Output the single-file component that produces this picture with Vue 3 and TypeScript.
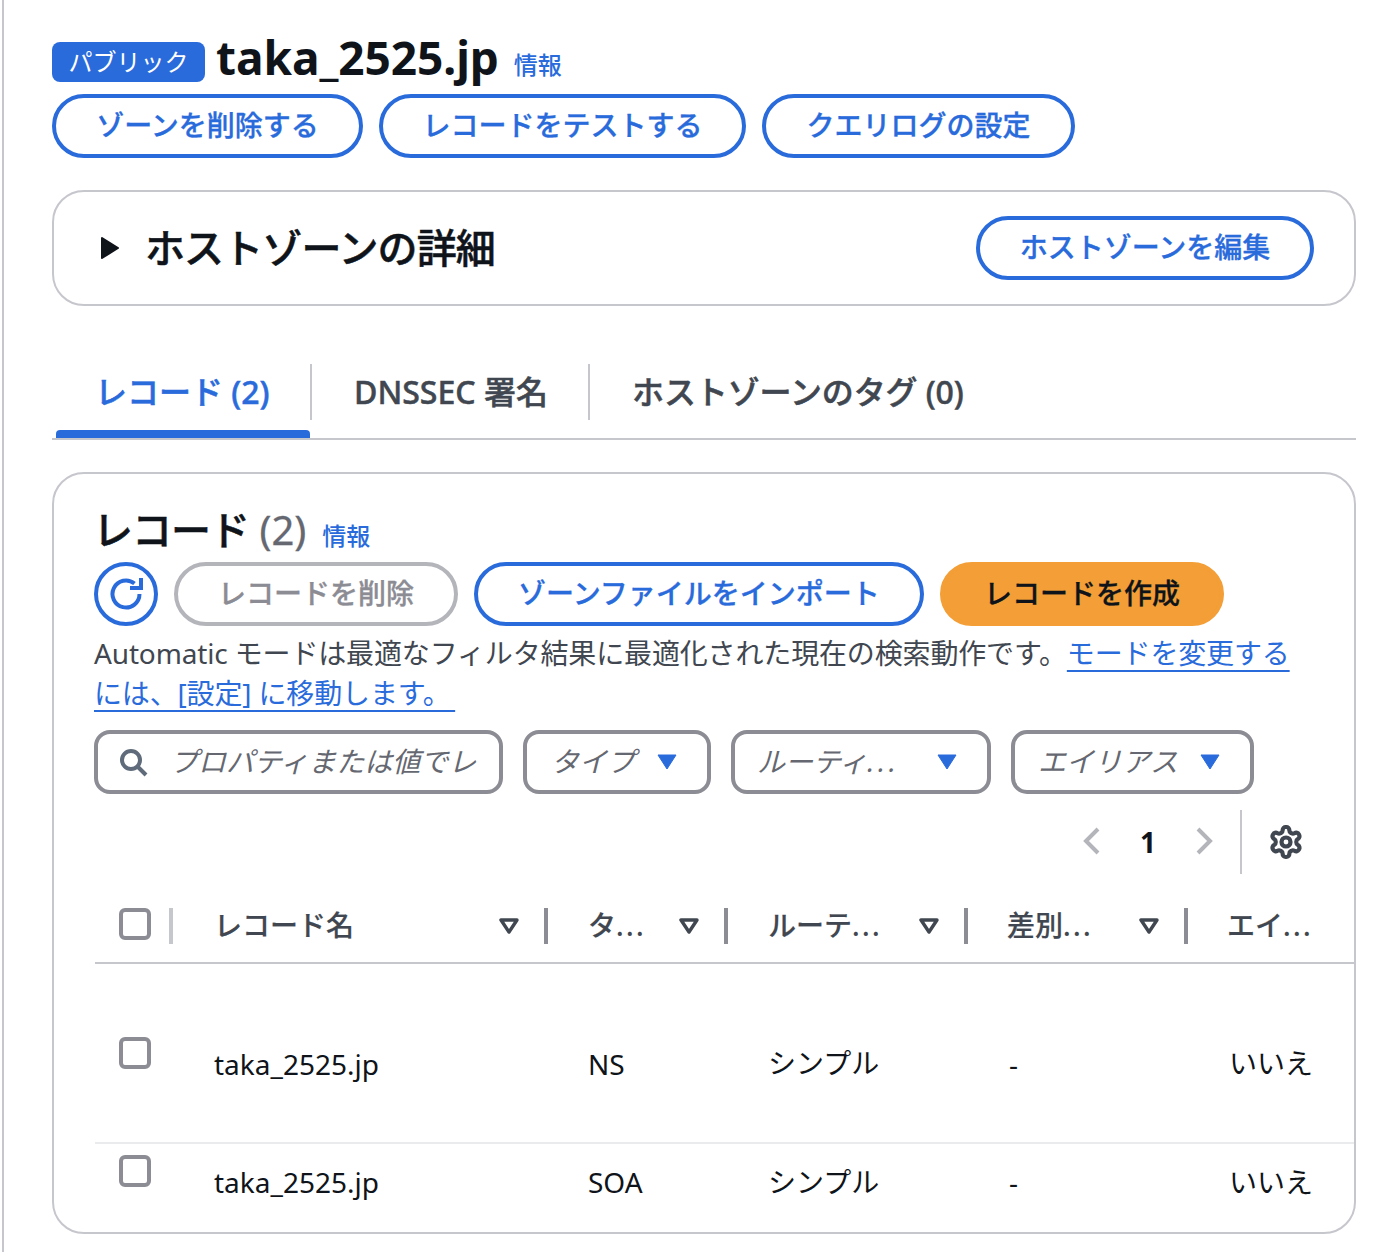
<script setup lang="ts">
interface Col { label: string; dots: boolean; cls: string }
const cols: Col[] = [
  { label: 'レコード名', dots: false, cls: 'c-name' },
  { label: 'タ', dots: true, cls: 'c-type' },
  { label: 'ルーテ', dots: true, cls: 'c-route' },
  { label: '差別', dots: true, cls: 'c-diff' },
]
const rows = [
  { name: 'taka_2525.jp', type: 'NS', route: 'シンプル', diff: '-', alias: 'いいえ', cls: 'row-tall' },
  { name: 'taka_2525.jp', type: 'SOA', route: 'シンプル', diff: '-', alias: 'いいえ', cls: 'row-short' },
]
const filters = [
  { label: 'タイプ', dots: false, cls: 'f-type' },
  { label: 'ルーティ', dots: true, cls: 'f-route' },
  { label: 'エイリアス', dots: false, cls: 'f-alias' },
]
</script>

<template>
  <div class="page">
    <header class="head">
      <div class="title-row">
        <span class="badge">パブリック</span>
        <h1 class="zone">taka_2525.jp</h1>
        <a class="info">情報</a>
      </div>
      <div class="btn-row">
        <button class="btn w1">ゾーンを削除する</button>
        <button class="btn w2">レコードをテストする</button>
        <button class="btn w3">クエリログの設定</button>
      </div>
    </header>

    <section class="card details">
      <div class="details-left">
        <svg class="expand" viewBox="0 0 20 24" width="20" height="24"><path d="M2 2 L18 12 L2 22 Z" fill="#0f141a" stroke="#0f141a" stroke-width="2" stroke-linejoin="round" /></svg>
        <h2 class="h-details">ホストゾーンの詳細</h2>
      </div>
      <button class="btn w4">ホストゾーンを編集</button>
    </section>

    <nav class="tabs">
      <div class="tab active t1"><span>レコード (2)</span></div>
      <div class="tab t2"><span>DNSSEC 署名</span></div>
      <div class="tab t3"><span>ホストゾーンのタグ (0)</span></div>
    </nav>

    <section class="card records">
      <div class="rec-pad">
        <div class="rec-title">
          <h2 class="h-rec"><span class="rec-word">レコード</span> <span class="count">(2)</span></h2>
          <a class="info">情報</a>
        </div>
        <div class="toolbar">
          <button class="icon-btn" aria-label="更新">
            <svg viewBox="0 0 36 36" width="36" height="36" fill="none" stroke="#2a6bdc" stroke-width="4">
              <path d="M31.5 18 A13.5 13.5 0 1 1 26.5 7.5" />
              <path d="M33 2 V12 H22" stroke-linejoin="miter" />
            </svg>
          </button>
          <button class="btn disabled w5">レコードを削除</button>
          <button class="btn w6">ゾーンファイルをインポート</button>
          <button class="btn primary w7">レコードを作成</button>
        </div>
        <p class="notice">Automatic モードは最適なフィルタ結果に最適化された現在の検索動作です。<a class="link">モードを変更するには、[設定] に移動します。&thinsp;</a></p>
        <div class="filters">
          <div class="filter f-search">
            <svg viewBox="0 0 32 32" width="32" height="32" fill="none" stroke="#5f6b7a" stroke-width="4"><circle cx="14" cy="14" r="9" /><path d="M20.5 20.5 L29 29" /></svg>
            <span class="ph">プロパティまたは値でレ</span>
          </div>
          <div v-for="f in filters" :key="f.cls" class="filter" :class="f.cls">
            <span class="ph">{{ f.label }}<span v-if="f.dots" class="dots">...</span></span>
            <svg viewBox="0 0 20 16" width="20" height="16"><path d="M1 1 H19 L10 15 Z" fill="#2a6bdc" stroke="#2a6bdc" stroke-linejoin="round" /></svg>
          </div>
        </div>
        <div class="pager">
          <svg viewBox="0 0 20 32" width="20" height="32" fill="none" stroke="#b4b4bb" stroke-width="4"><path d="M16 3 L4 15 L16 27" /></svg>
          <span class="page-num">1</span>
          <svg viewBox="0 0 20 32" width="20" height="32" fill="none" stroke="#b4b4bb" stroke-width="4"><path d="M4 3 L16 15 L4 27" /></svg>
          <span class="pager-sep"></span>
          <svg class="gear" viewBox="0 0 24 24" width="36" height="36" fill="none" stroke="#414750" stroke-width="2.8" stroke-linejoin="round">
            <path d="M12.22 2h-.44a2 2 0 0 0-2 2v.18a2 2 0 0 1-1 1.73l-.43.25a2 2 0 0 1-2 0l-.15-.08a2 2 0 0 0-2.73.73l-.22.38a2 2 0 0 0 .73 2.73l.15.1a2 2 0 0 1 1 1.72v.51a2 2 0 0 1-1 1.74l-.15.09a2 2 0 0 0-.73 2.73l.22.38a2 2 0 0 0 2.73.73l.15-.08a2 2 0 0 1 2 0l.43.25a2 2 0 0 1 1 1.73V20a2 2 0 0 0 2 2h.44a2 2 0 0 0 2-2v-.18a2 2 0 0 1 1-1.73l.43-.25a2 2 0 0 1 2 0l.15.08a2 2 0 0 0 2.73-.73l.22-.39a2 2 0 0 0-.73-2.73l-.15-.08a2 2 0 0 1-1-1.74v-.5a2 2 0 0 1 1-1.74l.15-.09a2 2 0 0 0 .73-2.73l-.22-.38a2 2 0 0 0-2.73-.73l-.15.08a2 2 0 0 1-2 0l-.43-.25a2 2 0 0 1-1-1.73V4a2 2 0 0 0-2-2z" />
            <circle cx="12" cy="12" r="3" />
          </svg>
        </div>
      </div>

      <div class="table">
        <div class="tr thead">
          <div class="td c-sel"><span class="check"></span><span class="sep light"></span></div>
          <div v-for="c in cols" :key="c.cls" class="td th" :class="c.cls">
            <span>{{ c.label }}<span v-if="c.dots" class="dots">...</span></span>
            <svg class="sort" viewBox="0 0 20 16" width="20" height="16" fill="none" stroke="#414750" stroke-width="3.4" stroke-linejoin="round"><path d="M2 2 H18 L10 14 Z" /></svg>
            <span class="sep"></span>
          </div>
          <div class="td th c-alias"><span>エイ<span class="dots">...</span></span></div>
        </div>
        <div v-for="r in rows" :key="r.type" class="tr tbody" :class="r.cls">
          <div class="td c-sel"><span class="check"></span></div>
          <div class="td c-name cell">{{ r.name }}</div>
          <div class="td c-type cell">{{ r.type }}</div>
          <div class="td c-route cell ja">{{ r.route }}</div>
          <div class="td c-diff cell">{{ r.diff }}</div>
          <div class="td c-alias cell ja">{{ r.alias }}</div>
        </div>
      </div>
    </section>
  </div>
</template>

<style>
html, body { margin: 0; background: #fff; }
</style>

<style scoped>
* { box-sizing: border-box; }
.page {
  height: 1252px;
  overflow: hidden;
  margin-left: 2px;
  width: 1396px;
  padding: 30px 42px 0 48px;
  border-left: 2px solid #c6c6cd;
  font-family: "Noto Sans", "Noto Sans CJK JP", sans-serif;
  color: #0f141a;
  display: flex;
  flex-direction: column;
}
button { font-family: inherit; }
h1, h2, p { margin: 0; }

.head { display: flex; flex-direction: column; }
.title-row { display: flex; align-items: center; height: 60px; }
.badge {
  width: 153px; height: 40px; margin-top: 4px;
  background: #2a6bdc; color: #fff; border-radius: 8px;
  font-size: 24px; line-height: 40px; text-align: center;
}
.zone { font-size: 46px; line-height: 54px; font-weight: 700; margin-left: 11px; margin-bottom: 6px; letter-spacing: -0.05px; }
.info { color: #2a6bdc; font-size: 24px; font-weight: 500; margin-left: 15px; margin-top: 6px; }
.btn-row { display: flex; gap: 16px; margin-top: 4px; }

.btn {
  height: 64px; border: 4px solid #2a6bdc; border-radius: 32px; background: #fff;
  color: #2a6bdc; font-size: 28px; font-weight: 500; padding: 0 0 2px; white-space: nowrap;
  line-height: 1; display: flex; align-items: center; justify-content: center;
  -webkit-text-stroke: 0.3px currentColor;
}
.w1 { width: 311px; } .w2 { width: 367px; } .w3 { width: 313px; }
.w4 { width: 338px; } .w5 { width: 284px; } .w6 { width: 450px; } .w7 { width: 284px; }
.btn.disabled { border-color: #b4b4bb; color: #8c8c94; }
.btn.primary { background: #f39e36; border-color: #f39e36; color: #0f141a; }

.card { border: 2px solid #c6c6cd; border-radius: 32px; background: #fff; }
.details {
  margin-top: 32px; height: 116px; display: flex; align-items: center;
  justify-content: space-between; padding: 0 40px 0 46px;
}
.details-left { display: flex; align-items: center; gap: 25px; }
.h-details { font-size: 40px; font-weight: 500; line-height: 52px; letter-spacing: -0.9px; -webkit-text-stroke: 0.5px currentColor; }

.tabs {
  margin-top: 58px; height: 76px; display: flex; border-bottom: 2px solid #c6c6cd; position: relative;
}
.tab {
  height: 56px; display: flex; align-items: center; font-size: 32px; font-weight: 500; color: #414750;
  white-space: nowrap; padding-left: 42px; padding-bottom: 4px; position: relative;
  -webkit-text-stroke: 0.5px currentColor;
}
.t1 { width: 260px; padding-left: 43px; border-right: 2px solid #c6c6cd; }
.t2 { width: 278px; border-right: 2px solid #c6c6cd; }
.t3 { flex: 1; padding-left: 42px; letter-spacing: -0.1px; }
.tab.active { color: #2a6bdc; }
.tab.active::after {
  content: ""; position: absolute; left: 4px; right: 0; top: 66px; height: 8px;
  background: #2a6bdc; border-radius: 4px 4px 0 0;
}

.records { margin-top: 32px; height: 762px; overflow: hidden; }
.rec-pad { padding: 26px 40px 0 40px; }
.rec-title { display: flex; align-items: center; height: 62px; padding-bottom: 2px; }
.h-rec { font-size: 40px; font-weight: 500; line-height: 60px; margin-left: -1px; }
.rec-word { letter-spacing: -1px; -webkit-text-stroke: 0.5px currentColor; }
.count { font-weight: 400; color: #656871; font-size: 40px; -webkit-text-stroke: 0.3px currentColor; }
.rec-title .info { margin-left: 16px; margin-top: 8px; }

.toolbar { display: flex; gap: 16px; align-items: center; }
.icon-btn {
  width: 64px; height: 64px; border-radius: 50%; border: 4px solid #2a6bdc; background: #fff;
  display: flex; align-items: center; justify-content: center; padding: 0;
}
.notice { font-size: 28px; line-height: 40px; color: #414750; margin-top: 7px; width: 1210px; letter-spacing: -0.15px; }
.link { color: #2a6bdc; text-decoration: underline; text-decoration-thickness: 2px; text-underline-offset: 6px; }

.filters { display: flex; gap: 20px; margin-top: 17px; }
.filter {
  height: 64px; border: 4px solid #8c8c94; border-radius: 16px; display: flex; align-items: center;
  background: #fff;
}
.ph { font-size: 28px; font-style: italic; color: #656871; white-space: nowrap; margin-bottom: 4px; }
.dots { letter-spacing: 3.5px; }
.th .dots { letter-spacing: 2.4px; }
.f-search { width: 409px; padding-left: 19px; gap: 21px; overflow: hidden; }
.f-type { width: 188px; padding: 0 30px 0 24px; justify-content: space-between; }
.f-route { width: 260px; padding: 0 30px 0 22px; justify-content: space-between; }
.f-alias { width: 243px; padding: 0 30px 0 23px; justify-content: space-between; }

.pager { display: flex; align-items: center; height: 64px; margin-top: 16px; justify-content: flex-end; padding-right: 10px; }
.page-num { font-size: 28px; font-weight: 700; width: 92px; text-align: center; }
.pager-sep { width: 2px; height: 64px; background: #c6c6cd; margin: 0 26px 0 26px; }

.table { margin-left: 41px; margin-top: 10px; }
.tr { display: flex; }
.thead { height: 80px; border-bottom: 2px solid #c6c6cd; }
.tbody { border-bottom: 2px solid #e9ebed; }
.tbody:last-child { border-bottom: none; }
.row-tall { height: 180px; }
.row-short { height: 90px; }
.td { position: relative; display: flex; align-items: center; white-space: nowrap; }
.c-sel { width: 78px; padding-left: 24px; }
.c-name { width: 375px; }
.c-type { width: 180px; }
.c-route { width: 240px; }
.c-diff { width: 220px; }
.c-alias { width: 166px; }
.th { font-size: 28px; font-weight: 500; color: #414750; padding-left: 41px; padding-top: 2px; justify-content: flex-start; -webkit-text-stroke: 0.2px currentColor; }
.th.c-type, .th.c-route { padding-left: 40px; }
.th.c-diff, .th.c-alias { padding-left: 39px; }
.check { width: 32px; height: 32px; border: 4px solid #8c8c94; border-radius: 6px; background: #fff; display: block; }
.thead .c-sel { align-items: center; padding-top: 2px; }
.sep { position: absolute; right: 0; top: 24px; height: 36px; width: 4px; background: #8c8c94; }
.sep.light { background: #c6c6cd; right: 0; }
.sort { position: absolute; right: 29px; top: 34px; }
.cell { font-size: 28px; color: #0f141a; padding-left: 41px; }
.cell.c-type { padding-left: 40px; }
.cell.c-route { padding-left: 40px; }
.row-tall .c-sel { align-items: flex-start; padding-top: 73px; }
.row-short .c-sel { align-items: flex-start; padding-top: 11px; }
.row-tall .cell { padding-top: 22px; }
.row-tall .cell.ja { padding-top: 18px; }
.row-short .cell { align-items: flex-start; padding-top: 19px; }
.row-short .cell.ja { padding-top: 17px; }
</style>
